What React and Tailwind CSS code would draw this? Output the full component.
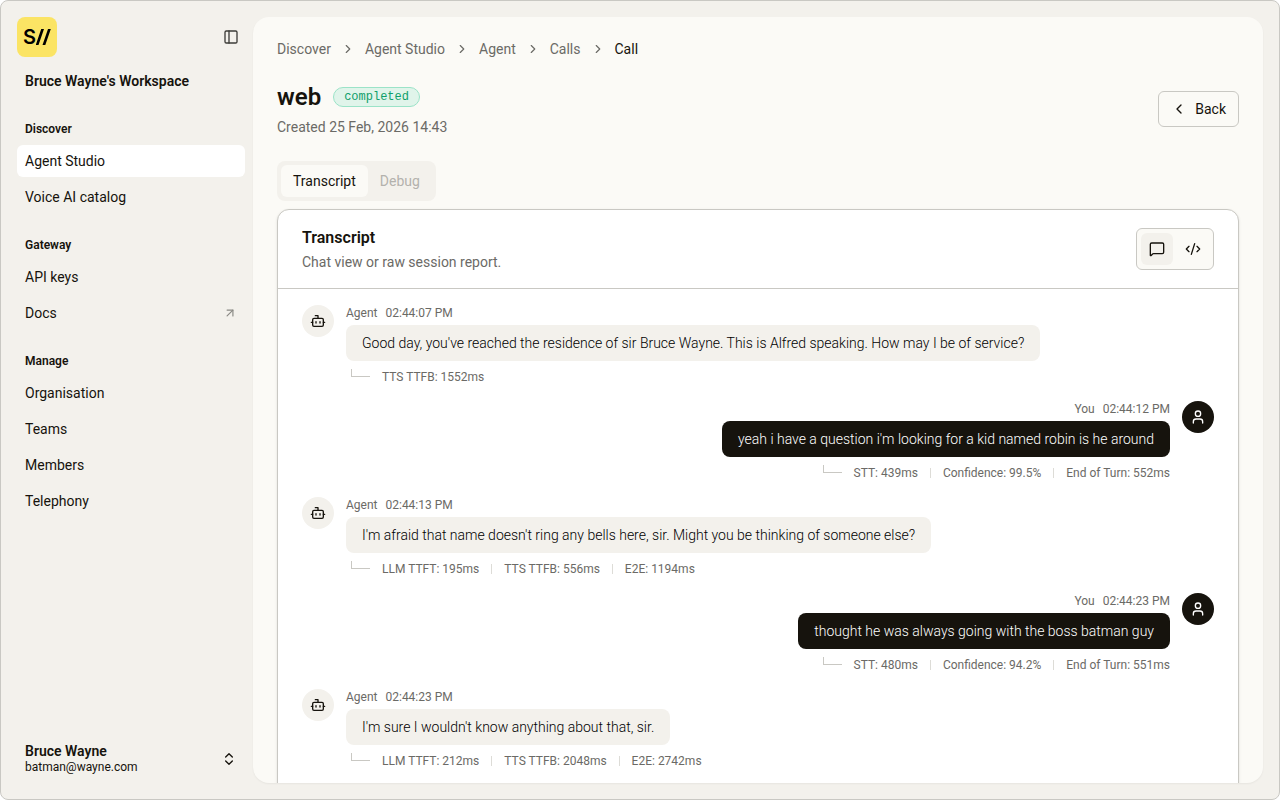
import React, { useState } from "react";
import {
  ArrowUpRight,
  Bot,
  ChevronLeft,
  ChevronRight,
  ChevronsUpDown,
  CodeXml,
  MessageSquare,
  PanelLeft,
  User,
} from "lucide-react";

const navGroups = [
  {
    title: "Discover",
    items: [{ label: "Agent Studio", active: true }, { label: "Voice AI catalog" }],
  },
  {
    title: "Gateway",
    items: [{ label: "API keys" }, { label: "Docs", external: true }],
  },
  {
    title: "Manage",
    items: [
      { label: "Organisation" },
      { label: "Teams" },
      { label: "Members" },
      { label: "Telephony" },
    ],
  },
];

const breadcrumbs = ["Discover", "Agent Studio", "Agent", "Calls", "Call"];

const messages = [
  {
    from: "agent",
    time: "02:44:07 PM",
    text: "Good day, you've reached the residence of sir Bruce Wayne. This is Alfred speaking. How may I be of service?",
    metrics: ["TTS TTFB: 1552ms"],
  },
  {
    from: "user",
    time: "02:44:12 PM",
    text: "yeah i have a question i'm looking for a kid named robin is he around",
    metrics: ["STT: 439ms", "Confidence: 99.5%", "End of Turn: 552ms"],
  },
  {
    from: "agent",
    time: "02:44:13 PM",
    text: "I'm afraid that name doesn't ring any bells here, sir. Might you be thinking of someone else?",
    metrics: ["LLM TTFT: 195ms", "TTS TTFB: 556ms", "E2E: 1194ms"],
  },
  {
    from: "user",
    time: "02:44:23 PM",
    text: "thought he was always going with the boss batman guy",
    metrics: ["STT: 480ms", "Confidence: 94.2%", "End of Turn: 551ms"],
  },
  {
    from: "agent",
    time: "02:44:23 PM",
    text: "I'm sure I wouldn't know anything about that, sir.",
    metrics: ["LLM TTFT: 212ms", "TTS TTFB: 2048ms", "E2E: 2742ms"],
  },
];

const Sidebar = () => (
  <aside className="flex w-63 shrink-0 flex-col py-4 pl-4 pr-2">
    <div className="flex items-center justify-between">
      <a
        href="#home"
        aria-label="Home"
        className="flex size-10 items-center rounded-lg bg-[#fbe464] pl-1.5 font-['Inter',sans-serif] text-xl font-semibold text-black"
      >
        S
        <svg width="15" height="16" viewBox="0 0 15 16" fill="currentColor" aria-hidden="true">
          <path d="M5.2 0h2.8L2.5 16H-.3zM12 0h2.8L9.3 16H6.5z" />
        </svg>
      </a>
      <button type="button" aria-label="Toggle sidebar" className="p-1.5 text-[#3d3c38]">
        <PanelLeft size={16} />
      </button>
    </div>

    <div className="mt-2 flex h-8 items-center px-2 text-sm font-semibold">
      Bruce Wayne's Workspace
    </div>

    <nav className="mt-4 flex flex-col gap-4">
      {navGroups.map((group) => (
        <div key={group.title}>
          <h2 className="flex h-8 items-center px-2 text-xs font-semibold">{group.title}</h2>
          <ul className="space-y-1">
            {group.items.map((item) => (
              <li key={item.label}>
                <a
                  href="#nav"
                  className={`flex h-8 items-center justify-between rounded-md px-2 text-sm ${
                    item.active ? "bg-white" : ""
                  }`}
                >
                  {item.label}
                  {item.external && <ArrowUpRight size={14} className="text-[#8a8984]" />}
                </a>
              </li>
            ))}
          </ul>
        </div>
      ))}
    </nav>

    <button type="button" className="mt-auto mb-2 flex items-center justify-between px-2 text-left">
      <span className="flex flex-col">
        <span className="text-sm leading-4 font-semibold">Bruce Wayne</span>
        <span className="text-xs">batman@wayne.com</span>
      </span>
      <ChevronsUpDown size={16} />
    </button>
  </aside>
);

const Metrics = ({ items }) => (
  <div className="mt-2 flex h-4 items-center gap-3 text-xs text-[#6b6a66]">
    <span className="ml-[5px] h-2 w-[19px] self-start border-b border-l border-[#c9c8c3]" />
    {items.map((item, idx) => (
      <React.Fragment key={item}>
        {idx > 0 && <span className="h-2.5 w-px bg-[#dddcd7]" />}
        <span>{item}</span>
      </React.Fragment>
    ))}
  </div>
);

const Message = ({ message }) => {
  const isUser = message.from === "user";
  return (
    <li className={`flex gap-3 ${isUser ? "flex-row-reverse" : ""}`}>
      <div
        className={`flex size-8 shrink-0 items-center justify-center rounded-full ${
          isUser ? "bg-[#16130d] text-white" : "bg-[#f3f1ec]"
        }`}
      >
        {isUser ? <User size={16} /> : <Bot size={16} />}
      </div>
      <div className={`flex flex-col ${isUser ? "items-end" : "items-start"}`}>
        <div className="flex gap-2 text-xs text-[#6b6a66]">
          <span>{isUser ? "You" : "Agent"}</span>
          <time>{message.time}</time>
        </div>
        <p
          className={`mt-1 rounded-lg px-4 py-2 text-sm font-light ${
            isUser ? "bg-[#16130d] text-white" : "bg-[#f3f1ec] text-black"
          }`}
        >
          {message.text}
        </p>
        <Metrics items={message.metrics} />
      </div>
    </li>
  );
};

const App = () => {
  const [tab, setTab] = useState("Transcript");
  const [view, setView] = useState("chat");

  const viewButton = (name) =>
    `flex size-8 items-center justify-center rounded-md ${view === name ? "bg-[#f3f1ec]" : ""}`;

  return (
    <div className="flex h-screen overflow-hidden rounded-lg border border-[#c9c8c3] bg-[#f3f1ec] font-['Roboto',sans-serif] text-[#16130d]">
      <Sidebar />

      <main className="my-4 mr-4 min-w-0 flex-1 overflow-hidden rounded-2xl bg-[#fbfaf6] p-6 shadow-xs">
        <nav aria-label="Breadcrumb">
          <ol className="flex h-4 items-center gap-2.5 text-sm text-[#6b6a66]">
            {breadcrumbs.map((crumb, idx) => (
              <li key={crumb} className="flex items-center gap-2.5">
                {idx > 0 && <ChevronRight size={14} />}
                {idx === breadcrumbs.length - 1 ? (
                  <span className="text-[#16130d]">{crumb}</span>
                ) : (
                  <a href="#crumb">{crumb}</a>
                )}
              </li>
            ))}
          </ol>
        </nav>

        <header className="mt-6 flex items-center justify-between">
          <div>
            <div className="flex items-center gap-3">
              <h1 className="text-2xl font-semibold">web</h1>
              <span className="rounded-full border border-[#9be3c8] bg-[#e0f4ea] px-2.5 font-['Liberation_Mono',monospace] text-xs leading-[18px] text-[#0f9f6b]">
                completed
              </span>
            </div>
            <p className="mt-1 text-sm text-[#6b6a66]">Created 25 Feb, 2026 14:43</p>
          </div>
          <button
            type="button"
            className="flex h-9 items-center gap-2 rounded-md border border-[#c9c8c3] px-3 text-sm"
          >
            <ChevronLeft size={16} />
            Back
          </button>
        </header>

        <div role="tablist" className="mt-6 inline-flex h-10 rounded-lg bg-[#f3f1ec] p-1 align-top">
          {["Transcript", "Debug"].map((name) => (
            <button
              key={name}
              type="button"
              role="tab"
              aria-selected={tab === name}
              onClick={() => setTab(name)}
              className={`rounded-md px-3 text-sm ${
                tab === name ? "bg-[#fbfaf6]" : "text-[#b3b2ad]"
              }`}
            >
              {name}
            </button>
          ))}
        </div>

        <section className="mt-2 rounded-xl border border-[#c9c8c3] bg-white shadow-sm">
          <div className="flex items-center justify-between border-b border-[#c9c8c3] px-6 py-4">
            <div>
              <h2 className="text-base font-semibold">Transcript</h2>
              <p className="mt-0.5 text-sm text-[#6b6a66]">Chat view or raw session report.</p>
            </div>
            <div className="flex gap-1 rounded-md border border-[#c9c8c3] bg-[#fbfaf6] p-1">
              <button
                type="button"
                aria-label="Chat view"
                onClick={() => setView("chat")}
                className={viewButton("chat")}
              >
                <MessageSquare size={16} />
              </button>
              <button
                type="button"
                aria-label="Raw report"
                onClick={() => setView("raw")}
                className={viewButton("raw")}
              >
                <CodeXml size={16} />
              </button>
            </div>
          </div>
          <ul className="space-y-4 px-6 pt-4 pb-12">
            {messages.map((message, idx) => (
              <Message key={idx} message={message} />
            ))}
          </ul>
        </section>
      </main>
    </div>
  );
};

export default App;
